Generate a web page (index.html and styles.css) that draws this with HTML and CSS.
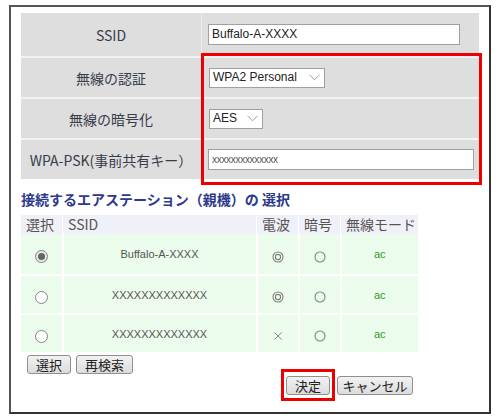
FILE: index.html
```html
<!DOCTYPE html>
<html lang="ja">
<head>
<meta charset="utf-8">
<link rel="stylesheet" href="styles.css">
</head>
<body>
<div class="frame">
  <table class="settings">
    <tr class="r1">
      <td class="label">SSID</td>
      <td class="value"><div class="input w-ssid">Buffalo-A-XXXX</div></td>
    </tr>
    <tr class="r2">
      <td class="label">無線の認証</td>
      <td class="value"><div class="select w-auth"><span>WPA2 Personal</span><svg class="chev" width="11" height="7" viewBox="0 0 11 7"><path d="M0.5 0.8 L5.5 5.8 L10.5 0.8" fill="none" stroke="#9a9a9a" stroke-width="1"/></svg></div></td>
    </tr>
    <tr class="r3">
      <td class="label">無線の暗号化</td>
      <td class="value"><div class="select w-enc"><span>AES</span><svg class="chev" width="11" height="7" viewBox="0 0 11 7"><path d="M0.5 0.8 L5.5 5.8 L10.5 0.8" fill="none" stroke="#9a9a9a" stroke-width="1"/></svg></div></td>
    </tr>
    <tr class="r4">
      <td class="label">WPA-PSK(事前共有キー）</td>
      <td class="value"><div class="input w-psk psk">xxxxxxxxxxxxxx</div></td>
    </tr>
  </table>
  <div class="redbox"></div>

  <h2 class="heading">接続するエアステーション（親機）の 選択</h2>

  <table class="ap">
    <tr class="head">
      <th class="c-sel">選択</th>
      <th class="c-ssid">SSID</th>
      <th class="c-sig">電波</th>
      <th class="c-enc">暗号</th>
      <th class="c-mode">無線モード</th>
    </tr>
    <tr>
      <td class="center"><span class="radio checked"></span></td>
      <td class="center ssid">Buffalo-A-XXXX</td>
      <td class="center"><svg width="12" height="12" viewBox="0 0 12 12"><circle cx="6" cy="6" r="5" fill="none" stroke="#808080" stroke-width="1.1"/><circle cx="6" cy="6" r="2.6" fill="none" stroke="#808080" stroke-width="1.1"/></svg></td>
      <td class="center"><svg width="12" height="12" viewBox="0 0 12 12"><circle cx="6" cy="6" r="5" fill="none" stroke="#808080" stroke-width="1.1"/></svg></td>
      <td class="center mode">ac</td>
    </tr>
    <tr>
      <td class="center"><span class="radio"></span></td>
      <td class="center ssid">XXXXXXXXXXXXX</td>
      <td class="center"><svg width="12" height="12" viewBox="0 0 12 12"><circle cx="6" cy="6" r="5" fill="none" stroke="#808080" stroke-width="1.1"/><circle cx="6" cy="6" r="2.6" fill="none" stroke="#808080" stroke-width="1.1"/></svg></td>
      <td class="center"><svg width="12" height="12" viewBox="0 0 12 12"><circle cx="6" cy="6" r="5" fill="none" stroke="#808080" stroke-width="1.1"/></svg></td>
      <td class="center mode">ac</td>
    </tr>
    <tr>
      <td class="center"><span class="radio"></span></td>
      <td class="center ssid">XXXXXXXXXXXXX</td>
      <td class="center"><svg width="10" height="10" viewBox="0 0 10 10"><path d="M1.5 1.5 L8.5 8.5 M8.5 1.5 L1.5 8.5" stroke="#8a8a8a" stroke-width="1"/></svg></td>
      <td class="center"><svg width="12" height="12" viewBox="0 0 12 12"><circle cx="6" cy="6" r="5" fill="none" stroke="#808080" stroke-width="1.1"/></svg></td>
      <td class="center mode">ac</td>
    </tr>
  </table>

  <div class="btnrow first">
    <button class="btn w-sel">選択</button>
    <button class="btn w-rescan">再検索</button>
  </div>
  <div class="btnrow second">
    <span class="hl"><button class="btn w-ok">決定</button></span>
    <button class="btn w-cancel">キャンセル</button>
  </div>
</div>
</body>
</html>
```
FILE: styles.css
```css
html, body {
  margin: 0;
  padding: 0;
  background: #fff;
}
body {
  font-family: "Noto Sans CJK JP", "Liberation Sans", sans-serif;
}
.frame {
  position: relative;
  box-sizing: border-box;
  width: 482px;
  height: 409px;
  margin: 5px 0 0 9px;
  padding: 6px 10px 0;
  border: 2px solid #555;
  border-right-color: #333;
  border-bottom-color: #333;
}
.settings {
  width: 458px;
  border-collapse: collapse;
  border-spacing: 0;
}
.settings td {
  background: #dedede;
  padding: 0;
  vertical-align: middle;
}
.settings tr + tr td {
  border-top: 2px solid #f2f2f2;
}
.settings .r1 td { height: 43px; }
.settings .r2 td, .settings .r3 td { height: 39px; }
.settings .r4 td { height: 39px; }
.label {
  width: 180px;
  text-align: center;
  font-size: 14px;
  color: #363c48;
  border-right: 1px solid #ececec;
}
.value {
  padding-left: 6px !important;
}
.input, .select {
  box-sizing: border-box;
  height: 21px;
  background: #fff;
  border: 1px solid #a0a0a0;
  font-family: "Liberation Sans", Arial, sans-serif;
  font-size: 12px;
  color: #222;
  line-height: 19px;
  padding-left: 3px;
}
.w-ssid { width: 252px; margin-left: 0; }
.w-psk { width: 266px; }
.psk { font-size: 10px; color: #555; letter-spacing: -0.3px; }
.select {
  display: flex;
  align-items: center;
  justify-content: space-between;
  padding-right: 4px;
  height: 20px;
  margin-left: 1px;
}
.w-auth { width: 116px; }
.w-enc { width: 54px; }
.chev { flex: none; }
.redbox {
  position: absolute;
  left: 190px;
  top: 46px;
  width: 275px;
  height: 126px;
  border: 3px solid #ee0000;
}
.heading {
  margin: 10px 0 6px;
  font-size: 14px;
  line-height: 20px;
  font-weight: bold;
  color: #2b3a8c;
}
.ap {
  border-collapse: collapse;
  border-spacing: 0;
  width: 397px;
}
.ap th {
  background: #f0f0f8;
  font-weight: normal;
  font-size: 14px;
  color: #555;
  text-align: left;
  padding: 0 0 0 5px;
  height: 19px;
  line-height: 19px;
  border-left: 1px solid #fff;
}
.ap th:first-child, .ap td:first-child { border-left: none; }
.ap td {
  background: #ecfcec;
  height: 37px;
  padding: 0;
  border-left: 2px solid #fff;
  border-top: 2px solid #fff;
  vertical-align: middle;
}
.ap tr:nth-child(2) td { border-top: none; height: 40px; }
.c-sel { width: 36px; }
.c-ssid { width: 188px; }
.c-sig { width: 36px; }
.c-enc { width: 36px; }
.center { text-align: center; }
.center svg { display: inline-block; vertical-align: middle; }
.ssid {
  font-family: "Liberation Sans", Arial, sans-serif;
  font-size: 11px;
  color: #555;
}
.mode {
  font-family: "Liberation Sans", Arial, sans-serif;
  font-size: 11px;
  color: #2e9a2e;
}
.radio {
  display: inline-block;
  box-sizing: border-box;
  width: 13px;
  height: 13px;
  border: 1px solid #858585;
  border-radius: 50%;
  background: #fff;
  vertical-align: middle;
  position: relative;
}
.radio.checked {
  background: #e6e6e6;
}
.radio.checked::after {
  content: "";
  position: absolute;
  left: 2px;
  top: 2px;
  width: 7px;
  height: 7px;
  border-radius: 50%;
  background: #666;
}
.btnrow {
  display: flex;
  align-items: center;
}
.btnrow.first {
  margin: 3px 0 0 6px;
  gap: 5px;
}
.btnrow.second {
  margin: -5px 0 0 260px;
  gap: 2px;
}
.btn {
  box-sizing: border-box;
  height: 19px;
  padding: 0;
  margin: 0;
  border: 1px solid #8f8f8f;
  border-radius: 3px;
  background: linear-gradient(#f2f2f2, #dcdcdc);
  font-family: "Noto Sans CJK JP", sans-serif;
  font-size: 13px;
  line-height: 17px;
  color: #222;
}
.w-sel { width: 44px; }
.w-rescan { width: 57px; }
.w-ok { width: 44px; display: block; }
.w-cancel { width: 76px; }
.hl {
  display: block;
  border: 3px solid #ee0000;
  padding: 4px 2px 3px;
}
```
